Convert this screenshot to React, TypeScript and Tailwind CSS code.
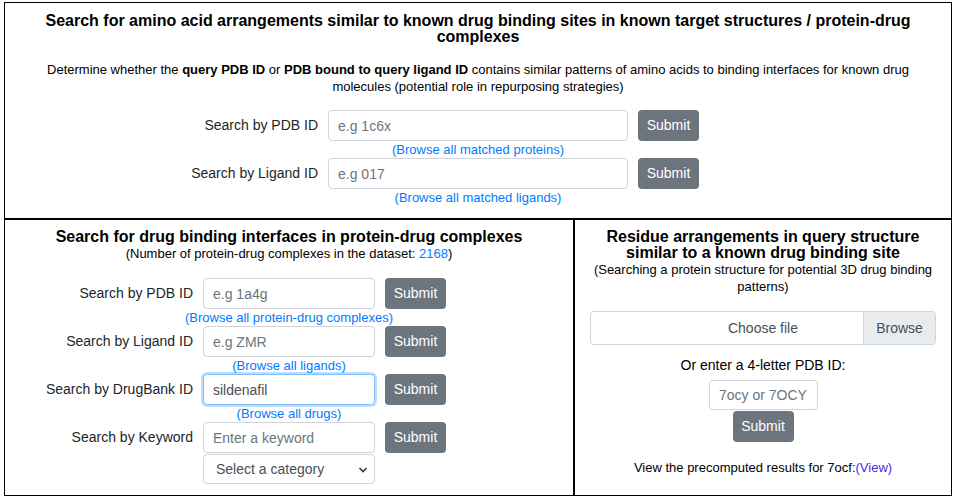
import React from "react";

const font = { fontFamily: '"Liberation Sans", Arial, Helvetica, sans-serif' };

function SubmitBtn() {
  return (
    <button className="h-[31px] w-[61px] rounded-[4px] bg-[#6c757d] text-[14px] text-white">
      Submit
    </button>
  );
}

function Row({
  label,
  placeholder,
  value,
  focused,
  inputW,
}: {
  label: string;
  placeholder?: string;
  value?: string;
  focused?: boolean;
  inputW: string;
}) {
  return (
    <div className={`grid ${inputW} items-center gap-x-[10px]`}>
      <div className="text-right text-[14px] text-[#212529]">{label}</div>
      <input
        readOnly
        value={value}
        placeholder={placeholder}
        className={
          focused
            ? "h-[31px] w-full rounded-[4px] border border-[#80bdff] bg-white px-[9px] text-[14px] text-[#495057] shadow-[0_0_0_2px_rgba(0,123,255,0.25)] outline-none"
            : "h-[31px] w-full rounded-[4px] border border-[#ced4da] bg-white px-[9px] text-[14px] text-[#495057] outline-none placeholder:text-[#6c757d]"
        }
      />
      <div className="text-left">
        <SubmitBtn />
      </div>
    </div>
  );
}

function LinkRow({ text, inputW }: { text: string; inputW: string }) {
  return (
    <div className={`grid ${inputW} gap-x-[10px]`}>
      <div />
      <div className="flex justify-center whitespace-nowrap text-[13px] leading-[17px] text-[#007bff]">
        <span>{text}</span>
      </div>
      <div />
    </div>
  );
}

export default function App() {
  const topW = "grid-cols-[1fr_300px_1fr]";
  const leftW = "grid-cols-[1fr_172px_1fr]";
  return (
    <div style={font} className="h-[498px] w-[956px] bg-white px-[4px] pt-[2px] text-black">
      {/* Top box */}
      <div className="h-[217px] border border-black pt-[10px] text-center">
        <h2 className="px-[40px] text-[16px] font-bold leading-[16px]">
          Search for amino acid arrangements similar to known drug binding sites in known target structures / protein-drug complexes
        </h2>
        <p className="mx-auto mt-[16px] w-[880px] text-[13px] leading-[17px]">
          Determine whether the <b>query PDB ID</b> or <b>PDB bound to query ligand ID</b> contains similar patterns of amino acids to binding interfaces for known drug molecules (potential role in repurposing strategies)
        </p>
        <div className="mt-[15px]">
          <Row label="Search by PDB ID" placeholder="e.g 1c6x" inputW={topW} />
          <LinkRow text="(Browse all matched proteins)" inputW={topW} />
          <Row label="Search by Ligand ID" placeholder="e.g 017" inputW={topW} />
          <LinkRow text="(Browse all matched ligands)" inputW={topW} />
        </div>
      </div>

      {/* Bottom row */}
      <div className="flex h-[277px]">
        <div className="w-[570px] border border-black pt-[9px] text-center">
          <h2 className="text-[16px] font-bold leading-[16px]">
            Search for drug binding interfaces in protein-drug complexes
          </h2>
          <p className="text-[13px] leading-[17px]">
            (Number of protein-drug complexes in the dataset: <span className="text-[#007bff]">2168</span>)
          </p>
          <div className="mt-[16px]">
            <Row label="Search by PDB ID" placeholder="e.g 1a4g" inputW={leftW} />
            <LinkRow text="(Browse all protein-drug complexes)" inputW={leftW} />
            <Row label="Search by Ligand ID" placeholder="e.g ZMR" inputW={leftW} />
            <LinkRow text="(Browse all ligands)" inputW={leftW} />
            <Row label="Search by DrugBank ID" value="sildenafil" focused inputW={leftW} />
            <LinkRow text="(Browse all drugs)" inputW={leftW} />
            <Row label="Search by Keyword" placeholder="Enter a keyword" inputW={leftW} />
            <div className={`grid ${leftW} mt-[1px] gap-x-[10px]`}>
              <div />
              <div className="relative flex h-[30px] w-full items-center rounded-[4px] border border-[#ced4da] bg-white pl-[12px] text-left text-[14px] text-[#495057]">
                Select a category
                <svg
                  className="absolute right-[6px] top-[10px]"
                  width="10"
                  height="10"
                  viewBox="0 0 10 10"
                  fill="none"
                  stroke="#343a40"
                  strokeWidth="1.6"
                >
                  <path d="M1.5 3l3.5 3.5L8.5 3" />
                </svg>
              </div>
              <div />
            </div>
          </div>
        </div>

        <div className="flex-1 border border-black px-[15px] pt-[9px] text-center">
          <h2 className="text-[16px] font-bold leading-[16px]">
            Residue arrangements in query structure similar to a known drug binding site
          </h2>
          <p className="-mx-[12px] text-[13px] leading-[17px]">
            (Searching a protein structure for potential 3D drug binding patterns)
          </p>
          <div className="relative mt-[16px] flex h-[34px] items-center rounded-[4px] border border-[#ced4da] bg-white text-[14px] text-[#495057]">
            <div className="absolute inset-0 flex items-center justify-center">Choose file</div>
            <div className="relative ml-auto flex h-full w-[72px] items-center justify-center rounded-r-[4px] border-l border-[#ced4da] bg-[#e9ecef]">
              Browse
            </div>
          </div>
          <p className="mt-[10px] text-[14px] leading-[20px]">Or enter a 4-letter PDB ID:</p>
          <div className="mt-[5px] flex flex-col items-center">
            <input
              readOnly
              placeholder="7ocy or 7OCY"
              className="h-[30px] w-[109px] rounded-[4px] border border-[#ced4da] bg-white text-center text-[14px] outline-none placeholder:text-[#6c757d]"
            />
            <div className="mt-[1px]">
              <SubmitBtn />
            </div>
          </div>
          <p className="mt-[17px] text-[13px] leading-[17px]">
            View the precomputed results for 7ocf:<span className="text-[#4d1fe6]">(View)</span>
          </p>
        </div>
      </div>
    </div>
  );
}
